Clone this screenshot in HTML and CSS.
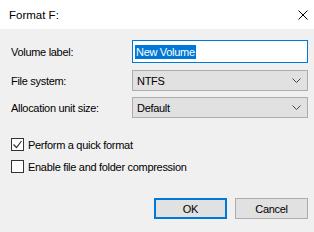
FILE: index.html
```html
<!DOCTYPE html>
<html lang="en">
<head>
    <meta charset="UTF-8">
    <title>Format F:</title>
    <link rel="stylesheet" href="styles.css">
</head>
<body>
<div class="window">
    <div class="titlebar">
        <span class="title">Format F:</span>
        <svg class="close" width="10" height="10" viewBox="0 0 10 10">
            <path d="M0.5 0.5 L9.5 9.5 M9.5 0.5 L0.5 9.5" stroke="#000" stroke-width="1"/>
        </svg>
    </div>
    <div class="content">
        <div class="row row-label">
            <label>Volume label:</label>
            <div class="textbox"><span class="selected">New Volume</span></div>
        </div>
        <div class="row row-fs">
            <label>File system:</label>
            <div class="combo">
                <span>NTFS</span>
                <svg width="9" height="5" viewBox="0 0 9 5"><path d="M0.5 0.5 L4.5 4.5 L8.5 0.5" fill="none" stroke="#444"/></svg>
            </div>
        </div>
        <div class="row row-alloc">
            <label>Allocation unit size:</label>
            <div class="combo">
                <span>Default</span>
                <svg width="9" height="5" viewBox="0 0 9 5"><path d="M0.5 0.5 L4.5 4.5 L8.5 0.5" fill="none" stroke="#444"/></svg>
            </div>
        </div>
        <div class="check check-quick">
            <span class="box">
                <svg width="11" height="11" viewBox="0 0 11 11"><path d="M1.5 5.5 L4.5 8.5 L9.5 2" fill="none" stroke="#333" stroke-width="1.2"/></svg>
            </span>
            <span>Perform a quick format</span>
        </div>
        <div class="check check-comp">
            <span class="box"></span>
            <span>Enable file and folder compression</span>
        </div>
        <div class="buttons">
            <button class="btn default">OK</button>
            <button class="btn">Cancel</button>
        </div>
    </div>
</div>
</body>
</html>
```

FILE: styles.css
```css
body {
    margin: 0;
    font-family: "Liberation Sans", Arial, sans-serif;
    font-size: 11px;
    letter-spacing: -0.3px;
    color: #000;
    background-color: #f0f0f0;
}

.window {
    width: 314px;
    height: 232px;
    display: flex;
    flex-direction: column;
}

.titlebar {
    height: 29px;
    background-color: #fff;
    display: flex;
    align-items: center;
    justify-content: space-between;
    padding: 0 6px 0 9px;
    flex-shrink: 0;
}

.title {
    font-size: 11.5px;
    letter-spacing: 0;
}

.content {
    padding: 11px 6px 0 11px;
}

.row {
    display: flex;
    align-items: center;
}

.row label {
    width: 121px;
}

.row-fs {
    margin-top: 7px;
}

.row-alloc {
    margin-top: 6px;
}

.textbox {
    width: 172px;
    height: 21px;
    border: 1px solid #0078d7;
    background-color: #fff;
    padding-left: 2px;
    display: flex;
    align-items: center;
}

.selected {
    background-color: #0078d7;
    color: #fff;
    line-height: 14px;
    padding: 0 1px;
}

.combo {
    width: 164px;
    height: 19px;
    border: 1px solid #adadad;
    background-color: #e1e1e1;
    display: flex;
    align-items: center;
    justify-content: space-between;
    padding: 0 6px 0 4px;
}

.check {
    display: flex;
    align-items: center;
    gap: 4px;
    height: 13px;
}

.check-quick {
    margin-top: 20px;
}

.check-comp {
    margin-top: 9px;
}

.box {
    width: 11px;
    height: 11px;
    border: 1px solid #333;
    background-color: #fff;
    display: flex;
}

.buttons {
    display: flex;
    justify-content: flex-end;
    gap: 8px;
    margin-top: 25px;
}

.btn {
    width: 73px;
    height: 21px;
    font-family: inherit;
    font-size: 11px;
    letter-spacing: inherit;
    background-color: #e1e1e1;
    border: 1px solid #adadad;
    padding: 0;
    color: #000;
}

.btn.default {
    border: 2px solid #0078d7;
}
```
